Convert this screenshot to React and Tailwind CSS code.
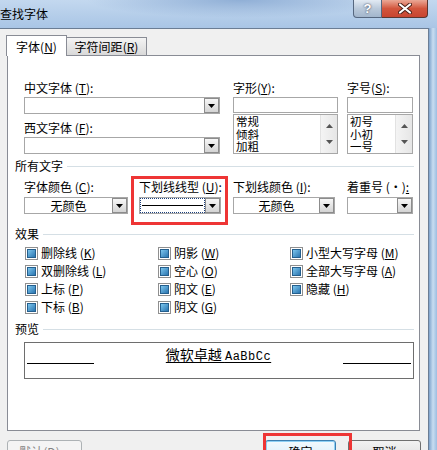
import React from 'react';

const Acc = ({ k }) => (
  <>
    (<span className="underline underline-offset-[1px]">{k}</span>)
  </>
);

const Label = ({ text, k, colon = true }) => (
  <div className="h-[14px] leading-[14px] text-[12px] whitespace-nowrap">
    {text}
    {k && <Acc k={k} />}
    {colon && ':'}
  </div>
);

const DownArrow = ({ color = '#000' }) => (
  <svg width="7" height="4" viewBox="0 0 7 4">
    <path d="M0 0h7L3.5 4z" fill={color} />
  </svg>
);

const UpArrow = ({ color = '#000' }) => (
  <svg width="7" height="4" viewBox="0 0 7 4">
    <path d="M0 4h7L3.5 0z" fill={color} />
  </svg>
);

const DropBtn = () => (
  <div className="w-[15px] h-[15px] shrink-0 border border-[#8c8c8c] bg-linear-to-b from-[#f7f7f7] to-[#d4d4d4] flex items-center justify-center">
    <DownArrow />
  </div>
);

const Combo = ({ children }) => (
  <div className="h-[17px] border border-[#a7a7a7] bg-white flex items-center">
    <div className="flex-1 h-full flex items-center justify-center text-[12px] leading-[14px]">{children}</div>
    <DropBtn />
  </div>
);

const ListBox = ({ items }) => (
  <div className="mt-[1px] h-[40px] border border-[#a7a7a7] bg-white flex">
    <div className="flex-1 pl-[2px]">
      {items.map((t) => (
        <div key={t} className="text-[11.5px] leading-[12.6px]">{t}</div>
      ))}
    </div>
    <div className="w-[17px] bg-linear-to-r from-[#f4f4f4] to-[#e6e6e6] border-l border-[#e2e2e2] flex flex-col items-center justify-between py-[9px]">
      <UpArrow color="#555" />
      <DownArrow color="#555" />
    </div>
  </div>
);

const Section = ({ title }) => (
  <div className="ml-[7px] mr-[5px] h-[14px] flex items-center">
    <span className="text-[12px] leading-[14px] whitespace-nowrap">{title}</span>
    <div className="flex-1 ml-[4px] h-px bg-[#d5dfe5]" />
  </div>
);

const Check = ({ text, k }) => (
  <div className="h-[18px] flex items-center">
    <div className="w-[13px] h-[13px] border border-[#8f8f8f] bg-white p-[1px] shrink-0">
      <div className="w-full h-full border border-[#245f8e] bg-linear-to-br from-[#7cc6ee] to-[#2a76b0]" />
    </div>
    <span className="ml-[3px] text-[12px] leading-[14px] whitespace-nowrap">
      {text}
      <Acc k={k} />
    </span>
  </div>
);

export default function App() {
  return (
    <div className="relative w-[437px] h-[450px] overflow-hidden bg-[#f0f0f0] text-black font-['Noto_Sans_CJK_SC',sans-serif]">
      {/* title bar */}
      <div className="h-[28px] flex items-start bg-[radial-gradient(ellipse_at_55%_0%,#90afd6_0%,transparent_45%),linear-gradient(180deg,#c3d8ef,#a9c5e5)]">
        <div className="mt-[7px] text-[12px] leading-[14px] whitespace-nowrap">查找字体</div>
        <div className="flex-1" />
        <div className="flex mr-[9px]">
          <div className="w-[29px] h-[18px] rounded-bl-[4px] border border-t-0 border-[#56677f] bg-linear-to-b from-[#e2eaf3] via-[#bac9da] to-[#a3b6cc] flex items-center justify-center">
            <span className="text-[13px] leading-[14px] font-bold font-['Liberation_Sans',sans-serif] text-white [text-shadow:0_0_2px_#223]">?</span>
          </div>
          <div className="w-[46px] h-[18px] rounded-br-[4px] border border-t-0 border-l-0 border-[#5b3630] bg-linear-to-b from-[#eaa896] via-[#d2553d] to-[#c84530] flex items-center justify-center">
            <svg width="14" height="11" viewBox="0 0 14 11">
              <path d="M2 1.5L12 9.5M12 1.5L2 9.5" stroke="#4a2018" strokeWidth="4" strokeLinecap="round" />
              <path d="M2 1.5L12 9.5M12 1.5L2 9.5" stroke="#fff" strokeWidth="2.2" strokeLinecap="round" />
            </svg>
          </div>
        </div>
      </div>

      <div className="flex">
        {/* client area */}
        <div className="w-[429px] h-[422px] border-t border-r border-[#6b7d94] bg-[#f0f0f0]">
          {/* tabs */}
          <div className="mt-[6px] h-[20px] flex items-end">
            <div className="relative z-10 ml-[6px] -mb-px w-[61px] h-[21px] border border-b-0 border-[#898c95] bg-white flex items-center justify-center">
              <span className="text-[12px] leading-[14px] whitespace-nowrap mt-[2px]">
                字体<Acc k="N" />
              </span>
            </div>
            <div className="w-[80px] h-[18px] border-t border-r border-[#898c95] bg-linear-to-b from-[#f4f4f4] to-[#d9d9d9] flex items-center justify-center">
              <span className="text-[12px] leading-[14px] whitespace-nowrap">
                字符间距<Acc k="R" />
              </span>
            </div>
          </div>

          {/* panel */}
          <div className="ml-[7px] w-[413px] h-[376px] border border-[#898c95] bg-white">
            {/* fonts row */}
            <div className="mt-[25px] ml-[16px] flex">
              <div className="w-[196px]">
                <Label text="中文字体 " k="T" />
                <div className="mt-[2px]"><Combo /></div>
                <div className="mt-[7px]"><Label text="西文字体 " k="F" /></div>
                <div className="mt-[2px]"><Combo /></div>
              </div>
              <div className="ml-[13px] w-[105px]">
                <Label text="字形" k="Y" />
                <div className="mt-[2px] h-[16px] border border-[#a7a7a7] bg-white" />
                <ListBox items={['常规', '倾斜', '加粗']} />
              </div>
              <div className="ml-[9px] w-[66px]">
                <Label text="字号" k="S" />
                <div className="mt-[2px] h-[16px] border border-[#a7a7a7] bg-white" />
                <ListBox items={['初号', '小初', '一号']} />
              </div>
            </div>

            <div className="mt-[5px]"><Section title="所有文字" /></div>

            {/* all text row */}
            <div className="mt-[7px] ml-[16px] flex">
              <div className="w-[104px]">
                <Label text="字体颜色 " k="C" />
                <div className="mt-[3px]"><Combo>无颜色</Combo></div>
              </div>
              <div className="ml-[11px] w-[82px]">
                <Label text="下划线线型 " k="U" />
                <div className="mt-[3px]">
                  <Combo>
                    <div className="w-full h-full border border-dotted border-[#1c3f7a] flex items-center px-[1px]">
                      <div className="w-full h-px bg-black" />
                    </div>
                  </Combo>
                </div>
              </div>
              <div className="ml-[12px] w-[102px]">
                <Label text="下划线颜色 " k="I" />
                <div className="mt-[3px]"><Combo>无颜色</Combo></div>
              </div>
              <div className="ml-[12px] w-[66px]">
                <div className="h-[14px] leading-[14px] text-[12px] whitespace-nowrap">
                  着重号 (·)<span className="underline">:</span>
                </div>
                <div className="mt-[3px]"><Combo /></div>
              </div>
            </div>

            <div className="mt-[13px]"><Section title="效果" /></div>

            <div className="mt-[3px] ml-[17px] grid grid-cols-[133px_132px_1fr]">
              <Check text="删除线 " k="K" />
              <Check text="阴影 " k="W" />
              <Check text="小型大写字母 " k="M" />
              <Check text="双删除线 " k="L" />
              <Check text="空心 " k="O" />
              <Check text="全部大写字母 " k="A" />
              <Check text="上标 " k="P" />
              <Check text="阳文 " k="E" />
              <Check text="隐藏 " k="H" />
              <Check text="下标 " k="B" />
              <Check text="阴文 " k="G" />
              <div />
            </div>

            <div className="mt-[6px]"><Section title="预览" /></div>

            <div className="mt-[6px] ml-[16px] w-[390px] h-[37px] border border-[#6e6e6e] bg-white pt-[6px]">
              <div className="h-[16px] flex items-end">
                <div className="ml-[2px] w-[67px] h-px bg-black mb-px" />
                <div className="flex-1 flex justify-center">
                  <span className="text-[14px] leading-[16px] whitespace-nowrap underline underline-offset-[2px]">
                    微软卓越 <span className="font-['Liberation_Mono',monospace] text-[12px] tracking-[0.5px]">AaBbCc</span>
                  </span>
                </div>
                <div className="mr-[2px] w-[68px] h-px bg-black mb-px" />
              </div>
            </div>
          </div>

          {/* buttons */}
          <div className="mt-[9px] flex">
            <div className="ml-[7px] w-[75px] h-[23px] rounded-[3px] border border-[#adb2b5] bg-[#f4f4f4] flex justify-center pt-[4px]">
              <span className="text-[12px] leading-[14px] text-[#838383] whitespace-nowrap">
                默认<Acc k="D" />...
              </span>
            </div>
            <div className="ml-[183px] w-[71px] h-[23px] rounded-[3px] border border-[#3c7fb1] bg-linear-to-b from-[#f2f9fd] to-[#d4ecfa] shadow-[inset_0_0_0_1px_#8ed0f5] flex justify-center pt-[4px]">
              <span className="text-[12px] leading-[14px] whitespace-nowrap">确定</span>
            </div>
            <div className="ml-[12px] w-[73px] h-[23px] rounded-[3px] border border-[#707070] bg-linear-to-b from-[#f2f2f2] to-[#dddddd] flex justify-center pt-[4px]">
              <span className="text-[12px] leading-[14px] whitespace-nowrap">取消</span>
            </div>
          </div>
        </div>

        {/* window frame edge */}
        <div className="flex-1 h-[422px] bg-linear-to-r from-[#7ea2cb] via-[#c9ddf1] to-[#9dbde0]" />
      </div>

      {/* red annotation boxes */}
      <div className="absolute left-[131px] top-[176px] w-[97px] h-[49px] border-[3px] border-[#ee3535]" />
      <div className="absolute left-[263px] top-[433px] w-[89px] h-[24px] border-[3px] border-[#ee3535]" />
    </div>
  );
}
